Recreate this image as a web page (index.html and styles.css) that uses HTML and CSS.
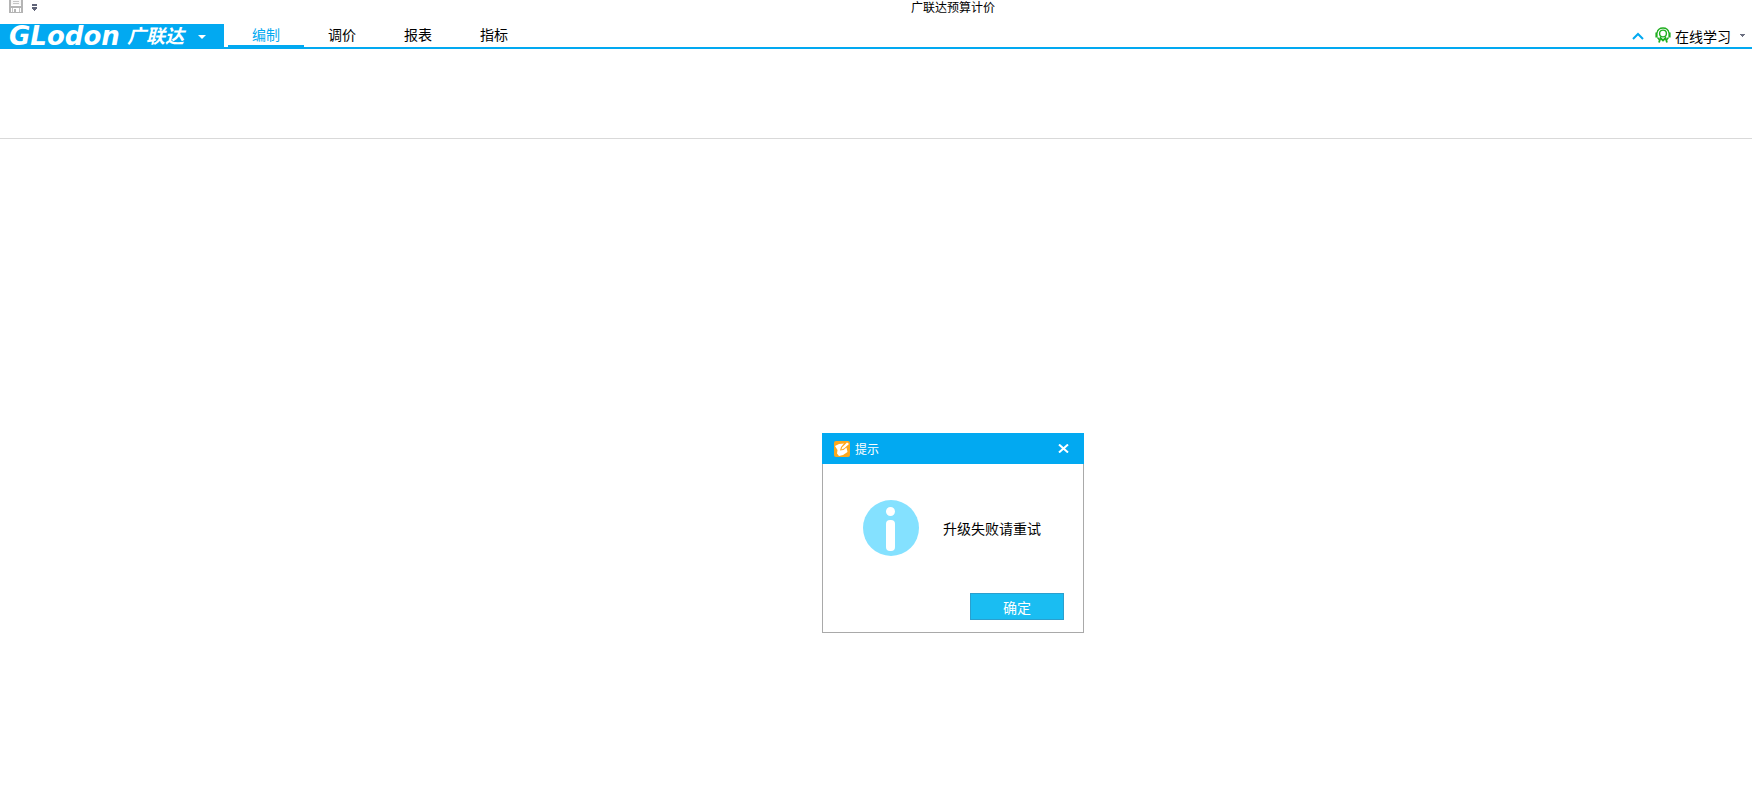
FILE: index.html
```html
<!DOCTYPE html>
<html lang="zh-CN">
<head>
<meta charset="utf-8">
<title>广联达预算计价</title>
<link rel="stylesheet" href="styles.css">
</head>
<body>
<header class="titlebar">
  <div class="quick">
    <button class="icon-btn" aria-label="保存">
      <svg width="14" height="13" viewBox="0 0 14 13" fill="#b4b4b4"><path d="M0 0H2V12H12V0H14V13H0Z"/><path d="M2 0H12V5H2Z" fill="#f6f6f6"/><path d="M4 1H10V2H4ZM4 3H10V4H4Z" fill="#c4c4c4"/><path d="M2 6H12V8H2Z"/><path d="M3 8H4V12H3ZM10 8H11V12H10Z" fill="#c4c4c4"/><path d="M5 9H7V12H5Z"/></svg>
    </button>
    <button class="icon-btn" aria-label="自定义快速访问工具栏">
      <svg width="5" height="7" viewBox="0 0 5 7" fill="#5f6377"><path d="M0 0H5V2H0ZM0 3H5V5H4V6H3V7H2V6H1V5H0Z"/></svg>
    </button>
  </div>
  <h1 class="app-title">广联达预算计价</h1>
</header>
<div class="ribbon">
  <button class="brand">
    <span class="brand-en">GLodon</span>
    <span class="brand-cn">广联达</span>
    <svg class="brand-arrow" width="8" height="4" viewBox="0 0 8 4" fill="#fff"><path d="M0 0H8L4 4Z"/></svg>
  </button>
  <nav class="tabs">
    <button class="tab tab-active">编制</button>
    <button class="tab">调价</button>
    <button class="tab">报表</button>
    <button class="tab">指标</button>
  </nav>
  <div class="tools">
    <button class="icon-btn" aria-label="收起功能区">
      <svg width="12" height="8" viewBox="0 0 12 8" fill="none" stroke="#02a9f1" stroke-width="2"><path d="M1 7L6 2L11 7"/></svg>
    </button>
    <button class="learn">
      <svg class="learn-icon" width="16" height="16" viewBox="0 0 16 16" fill="none" stroke="#1fae1f"><path d="M2 6A6.100 6.100 0 0 1 14 6" stroke-width="1.300"/><path d="M1.500 5.500V10.500M14.500 5.500V10.500" stroke-width="2.200"/><circle cx="8" cy="6.500" r="3.400" stroke-width="1.400"/><path d="M2.500 10.500L4.500 13M13.500 10.500L11.500 13" stroke-width="1.300"/><path d="M4 15.500L5.500 11L8 13.500L10.500 11L12 15.500" stroke-width="1.800"/></svg>
      <span>在线学习</span>
      <svg class="learn-arrow" width="5" height="3" viewBox="0 0 5 3" fill="#6b6f80"><path d="M0 0H5V1H4V2H3V3H2V2H1V1H0Z"/></svg>
    </button>
  </div>
</div>
<div class="toolbar"></div>
<main class="workspace"></main>
<section class="dialog" role="alertdialog" aria-labelledby="dlg-title" aria-describedby="dlg-msg">
  <header class="dialog-head">
    <svg width="16" height="16" viewBox="0 0 16 16"><rect width="16" height="16" rx="2" fill="#fca81c"/><path d="M1 5L5 3L10 2.500L7 6L6 9.500L9.500 9L12.500 6.500L13.500 11L9 14L5 15L3 12.500L3.500 9Z" fill="#fff"/><path d="M7.500 8.500L8 6.500L13 1.500L15 3L10 7.500Z" fill="#fff"/></svg>
    <h2 class="dialog-title" id="dlg-title">提示</h2>
    <button class="icon-btn" aria-label="关闭">
      <svg width="11" height="9" viewBox="0 0 11 9" fill="none" stroke="#fff" stroke-width="2"><path d="M1 .5L10 8.500M10 .5L1 8.500"/></svg>
    </button>
  </header>
  <div class="dialog-body">
    <svg width="56" height="56" viewBox="0 0 56 56"><circle cx="28" cy="28" r="28" fill="#84e1ff"/><circle cx="27.500" cy="11.500" r="4.500" fill="#fff"/><rect x="23" y="20" width="9" height="31" rx="4" fill="#fff"/></svg>
    <p class="message" id="dlg-msg">升级失败请重试</p>
  </div>
  <footer class="dialog-foot"><button class="confirm">确定</button></footer>
</section>
</body>
</html>
```
FILE: styles.css
```css
* { box-sizing: border-box; }
body {
  margin: 0;
  min-height: 100vh;
  display: flex;
  flex-direction: column;
  position: relative;
  background: #fff;
  color: #000;
  font: 14px/20px "Noto Sans CJK SC", sans-serif;
}
button {
  border: 0;
  padding: 0;
  background: none;
  color: inherit;
  font: inherit;
}
svg { display: block; flex: none; }
h1, h2, p { margin: 0; font-weight: 400; }
.icon-btn { display: flex; }
.titlebar {
  display: grid;
  grid-template-columns: 52% 1fr;
  height: 24px;
}
.quick {
  display: flex;
  align-items: flex-start;
  gap: 9px;
  padding-left: 9px;
}
.quick .icon-btn + .icon-btn { padding-top: 4px; }
.app-title { font-size: 12px; line-height: 13px; }
.ribbon {
  display: flex;
  height: 25px;
  border-bottom: 2px solid #02a9f1;
}
.brand {
  display: flex;
  align-items: center;
  width: 224px;
  height: 25px;
  padding-left: 9px;
  background: #02a9f1;
  color: #fff;
  font-style: italic;
  font-weight: 700;
  line-height: 24px;
}
.brand-en {
  width: 118px;
  padding-bottom: 2px;
  text-align: left;
  font-family: "DejaVu Sans", sans-serif;
  font-size: 26px;
}
.brand-cn { font-size: 19px; line-height: 20px; padding-bottom: 4px; }
.brand-arrow { margin-left: 14px; }
.tabs { display: flex; margin-left: 4px; }
.tab {
  width: 76px;
  height: 23px;
  padding-bottom: 2px;
  border-bottom: 2px solid transparent;
}
.tab-active { color: #02a9f1; border-color: #02a9f1; }
.tools {
  display: flex;
  align-items: center;
  gap: 11px;
  margin-left: auto;
  padding-right: 7px;
}
.learn { display: flex; align-items: center; gap: 4px; }
.learn-icon { margin-bottom: 2px; }
.learn-arrow { margin-left: 5px; }
.toolbar { height: 90px; border-bottom: 1px solid #d9d9d9; }
.workspace { flex: 1; }
.dialog {
  position: absolute;
  top: 433px;
  left: calc(50% - 54px);
  width: 262px;
  border: 1px solid #a9a9a9;
  border-top: 0;
  background: #fff;
}
.dialog-head {
  display: flex;
  align-items: center;
  gap: 5px;
  height: 31px;
  margin: 0 -1px;
  padding: 0 15px 0 12px;
  background: #02a9f1;
  color: #fff;
}
.dialog-title { flex: 1; font-size: 12px; }
.dialog-body {
  display: flex;
  align-items: center;
  gap: 24px;
  padding: 36px 0 37px 40px;
}
.dialog-foot {
  display: flex;
  justify-content: flex-end;
  padding: 0 19px 12px;
}
.confirm {
  width: 94px;
  height: 27px;
  border: 1px solid #2b9fce;
  background: #1abdf2;
  color: #fff;
}
```
